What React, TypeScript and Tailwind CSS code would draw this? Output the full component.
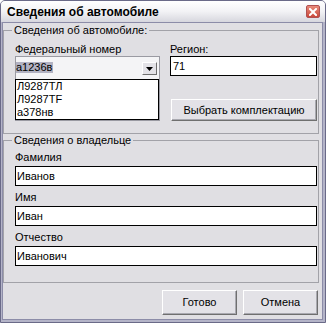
import React from "react";

function Field({ label, value }: { label: string; value: string }) {
  return (
    <div className="flex flex-col">
      <span className="h-[13px] leading-[13px] mb-[2px]">{label}</span>
      <div className="h-[20px] border border-black bg-white pl-[1px] leading-[18px]">{value}</div>
    </div>
  );
}

function Btn({ label, className }: { label: string; className: string }) {
  return (
    <div
      className={
        "flex items-center justify-center bg-[#e3e2e7] border border-t-white border-l-white border-r-[#6f6f6f] border-b-[#6f6f6f] shadow-[inset_-1px_-1px_0_#a9a9b0] " +
        className
      }
    >
      {label}
    </div>
  );
}

export default function App() {
  return (
    <div className="w-[326px] h-[323px] flex flex-col border border-[#6a6a88] bg-[#b4b4c8] rounded-t-[5px] overflow-hidden font-['Liberation_Sans',Arial,sans-serif] text-[11px] text-black">
      {/* title bar */}
      <div className="h-[21px] flex items-center pl-[6px] pr-[5px] bg-gradient-to-b from-white via-[#f2f2f5] to-[#d7d7de]">
        <span className="font-bold text-[12px] leading-[14px] mt-[1px]">Сведения об автомобиле</span>
        <div className="ml-auto w-[14px] h-[13px] rounded-[2px] border border-[#b05050] bg-gradient-to-b from-[#e88a7a] to-[#c8463a] flex items-center justify-center">
          <svg width="8" height="8" viewBox="0 0 8 8">
            <path d="M1 1 L7 7 M7 1 L1 7" stroke="#fff" strokeWidth="2" strokeLinecap="square" />
          </svg>
        </div>
      </div>

      {/* frame */}
      <div className="flex-1 flex pl-[1px] pr-[2px] pb-[2px]">
        <div className="flex-1 flex flex-col bg-[#e0dfe3] border border-[#8c8ca8] pt-[1px] pr-[3px]">
          <fieldset className="h-[110px] border border-[#a2a2a8] pl-[11px] pr-[1px] pt-[6px]">
            <legend className="ml-[-3px] px-[2px] h-[13px] leading-[13px]">Сведения об автомобиле:</legend>
            <div className="grid grid-cols-[145px_147px] gap-x-[10px]">
              <div className="flex flex-col">
                <span className="h-[13px] leading-[13px]">Федеральный номер</span>
                <div className="relative h-[65px] border border-[#9a9aa2] bg-[#f4f4f6]">
                  <div className="flex items-start h-[21px] pt-[5px] pr-[2px]">
                    <span className="h-[11px] leading-[11px] bg-[#b2b2c2] pr-[1px]">а1236в</span>
                    <div className="ml-auto w-[15px] h-[13px] -mt-[0px] bg-[#e3e2e7] border border-t-white border-l-white border-r-[#6f6f6f] border-b-[#6f6f6f] flex items-center justify-center">
                      <svg width="7" height="4" viewBox="0 0 7 4">
                        <path d="M0 0 H7 L3.5 4 Z" fill="#000" />
                      </svg>
                    </div>
                  </div>
                  <div className="absolute left-[-1px] right-0 top-[22px] h-[41px] border border-black bg-white pl-[1px] flex flex-col">
                    <span className="h-[13px] leading-[13px]">Л9287ТЛ</span>
                    <span className="h-[13px] leading-[13px]">Л9287TF</span>
                    <span className="h-[13px] leading-[13px]">а378нв</span>
                  </div>
                </div>
              </div>
              <div className="flex flex-col">
                <span className="h-[13px] leading-[13px]">Регион:</span>
                <div className="h-[20px] border border-black bg-white pl-[2px] leading-[18px]">71</div>
                <Btn label="Выбрать комплектацию" className="mt-[23px] ml-[1px] h-[22px]" />
              </div>
            </div>
          </fieldset>

          <fieldset className="h-[149px] border border-[#a2a2a8] pl-[11px] pr-[1px] pt-[2px] flex flex-col gap-[5px]">
            <legend className="ml-[-3px] px-[2px] h-[13px] leading-[13px]">Сведения о владельце</legend>
            <div className="flex flex-col gap-[5px] pt-[2px]">
              <Field label="Фамилия" value="Иванов" />
              <Field label="Имя" value="Иван" />
              <Field label="Отчество" value="Иванович" />
            </div>
          </fieldset>

          <div className="flex justify-end gap-[6px] mt-[7px] pr-[1px]">
            <Btn label="Готово" className="w-[75px] h-[25px]" />
            <Btn label="Отмена" className="w-[75px] h-[25px]" />
          </div>
        </div>
      </div>
    </div>
  );
}
